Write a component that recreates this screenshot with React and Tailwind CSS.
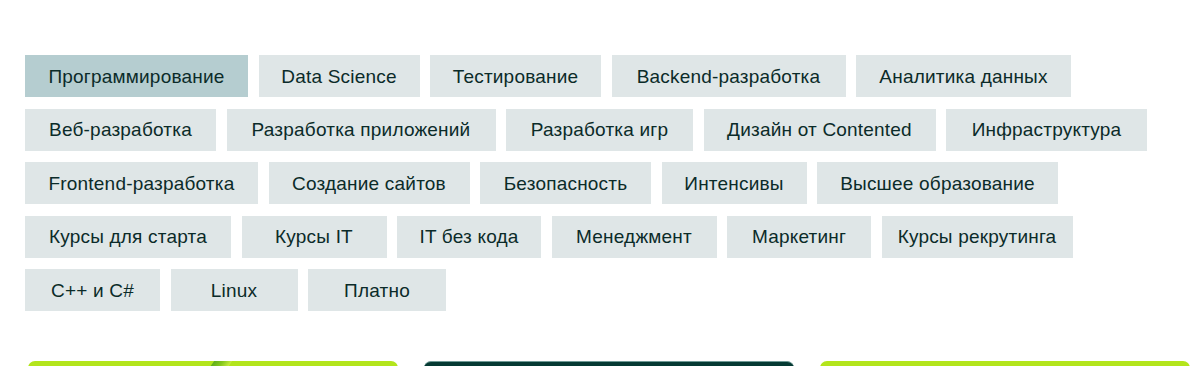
import React from "react";

const rows = [
  [
    ["Программирование", 223, true],
    ["Data Science", 161],
    ["Тестирование", 171],
    ["Backend-разработка", 234],
    ["Аналитика данных", 215],
  ],
  [
    ["Веб-разработка", 191],
    ["Разработка приложений", 269],
    ["Разработка игр", 187],
    ["Дизайн от Contented", 232],
    ["Инфраструктура", 201],
  ],
  [
    ["Frontend-разработка", 233],
    ["Создание сайтов", 201],
    ["Безопасность", 171],
    ["Интенсивы", 145],
    ["Высшее образование", 241],
  ],
  [
    ["Курсы для старта", 206],
    ["Курсы IT", 145],
    ["IT без кода", 144],
    ["Менеджмент", 165],
    ["Маркетинг", 144],
    ["Курсы рекрутинга", 191],
  ],
  [
    ["C++ и C#", 135],
    ["Linux", 127],
    ["Платно", 138],
  ],
];

const items = rows.flat();

export default function App() {
  return (
    <div
      className="w-[1200px] h-[366px] overflow-hidden bg-white"
      style={{ fontFamily: '"Liberation Sans", Arial, sans-serif' }}
    >
      <div className="pt-[55px] pl-[25px] w-[1175px] flex flex-wrap gap-x-[10.5px] gap-y-[11.5px]">
        {items.map(([label, w, active]) => (
          <div
            key={label}
            style={{ width: w }}
            className={`h-[42px] flex items-center justify-center text-[19px] tracking-[0.2px] leading-none text-[#0b2b29] ${
              active ? "bg-[#b5cdd0]" : "bg-[#dfe6e7]"
            }`}
          >
            {label}
          </div>
        ))}
      </div>
      <div className="mt-[50px] pl-[28px] flex gap-[26px]">
        <div className="relative w-[370px] h-[40px] rounded-t-[7px] bg-[#b3e51c] overflow-hidden">
          <div className="absolute top-0 left-[182px] w-[18px] h-[12px] bg-gradient-to-r from-[#5fae1c] via-[#86c81c] to-[#c6ec3c] -skew-x-[35deg]" />
        </div>
        <div className="w-[370px] h-[40px] rounded-t-[7px] bg-[#053a33] border-t border-[#6f9a95]" />
        <div className="w-[370px] h-[40px] rounded-t-[7px] bg-[#b3e51c]" />
      </div>
    </div>
  );
}
